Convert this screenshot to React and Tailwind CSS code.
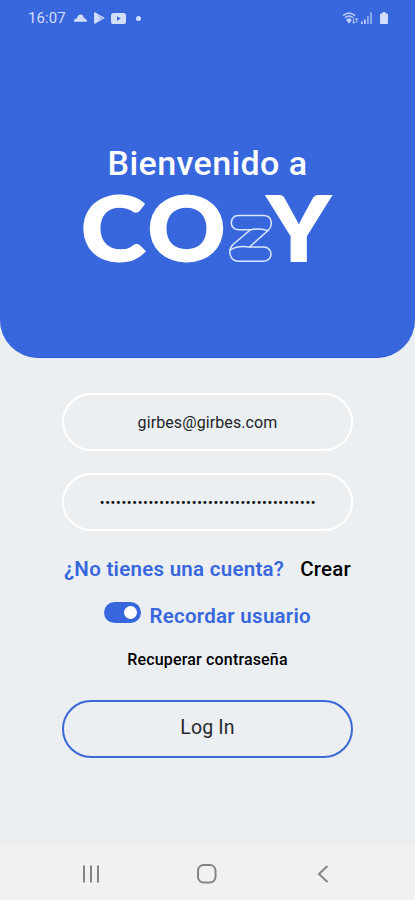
import React from "react";

function StatusBar() {
  return (
    <div className="flex h-9 items-center justify-between pl-[28px] pr-[26px] text-[#d3defa]">
      <div className="flex items-center">
        <span className="w-[45px] whitespace-nowrap text-[15px] leading-none tracking-[0.1px]">16:07</span>
        <svg width="15" height="10" viewBox="0 0 14 10" fill="currentColor">
          <path d="M.4 8.8Q.4 6 3.2 5.6Q4.5 1.6 7.2 1.6Q9.8 1.6 10.4 5.2Q13.4 5.6 13.4 8.8Z" />
        </svg>
        <svg className="ml-[5px]" width="13" height="12" viewBox="0 0 13 12" fill="none" stroke="currentColor" strokeWidth="1.3" strokeLinejoin="round">
          <path d="M1.8 1V11L10.8 6Z" />
          <path d="M2 1L7.8 7.5M2 11L7.8 4.5" />
          <path d="M2 1.5V10.5L5.5 6Z" fill="currentColor" />
        </svg>
        <svg className="ml-[5px]" width="15" height="11" viewBox="0 0 15 11">
          <rect width="15" height="11" rx="2.6" fill="currentColor" />
          <path d="M6 3.2V7.8L9.8 5.5Z" fill="#3867dd" />
        </svg>
        <span className="ml-[10px] h-[5px] w-[5px] rounded-full bg-current" />
      </div>
      <div className="flex items-center">
        <svg width="17" height="14" viewBox="0 0 17 14" fill="none" stroke="currentColor" strokeOpacity=".8" strokeWidth="1.6">
          <path d="M1 4.7Q7 -.4 13 4.7M3 6.7Q7 3.4 11 6.7M5 8.8Q7 7.2 9 8.8" />
          <path d="M7 11.4L5.6 9.6H8.4Z" fill="currentColor" />
          <path d="M11.7 7.2V12.2M10.3 10.8L11.7 12.3L13 10.8M14.7 12V7.2M13.3 8.6L14.7 7.1L16 8.6" strokeWidth="1" />
        </svg>
        <svg className="ml-[2px]" width="12" height="13" viewBox="0 0 12 13" fill="currentColor">
          <path d="M0 9.5H1.7V12H0ZM3 7.5H4.7V12H3Z" opacity=".9" />
          <path d="M6 4H7.8V12H6ZM9 .5H11V12H9Z" opacity=".55" />
        </svg>
        <svg className="ml-[7px] mr-[1px]" width="8" height="13" viewBox="0 0 8 13" fill="currentColor">
          <path d="M2.5 0H5.5V1.5H7Q8 1.5 8 2.5V11Q8 12 7 12H1Q0 12 0 11V2.5Q0 1.5 1 1.5H2.5Z" />
        </svg>
      </div>
    </div>
  );
}

function Logo() {
  return (
    <svg className="mx-auto block overflow-visible" width="260" height="80" viewBox="78 188 260 80">
      <g fill="#fff" stroke="#fff" strokeWidth="1.8" fontFamily="Lato, sans-serif" fontWeight="900" fontSize="90">
        <text x="81" y="260.5" textLength="64.5" lengthAdjust="spacingAndGlyphs">C</text>
        <text x="147.5" y="260.5" textLength="78" lengthAdjust="spacingAndGlyphs">O</text>
        <text x="267.6" y="260.5" textLength="62.5" lengthAdjust="spacingAndGlyphs">Y</text>
      </g>
      <g fill="none" stroke="#dbe8ff" strokeWidth="1.5" strokeLinejoin="round" strokeLinecap="round">
        <path d="M250.5 229.8H238.3C229 229.8 229 215.5 238.3 215.5H263.5C272.5 215.5 273 225.5 268.5 230L249.5 247" />
        <path d="M250.5 229.8Q261 227.8 267.8 230.6" />
        <path d="M250.5 229.8L233 244.5C227.5 250 229.5 261.2 238.3 261.2H263.5C273.5 261.2 273.5 247 263.5 247H249.5Q237 245.5 231.5 249.5" />
      </g>
    </svg>
  );
}

export default function App() {
  return (
    <main className="flex h-[900px] w-[415px] flex-col overflow-hidden bg-[#ebeff2] font-[Roboto,sans-serif] text-black">
      <header className="h-[358px] rounded-b-[38px] border-b border-[#2e5bdc] bg-[#3867dd]">
        <StatusBar />
        <h1 className="mt-[107px] text-center text-[34px] font-medium leading-[40px] tracking-[0.4px] text-white">Bienvenido a</h1>
        <div className="mt-[5px]">
          <Logo />
        </div>
      </header>

      <section className="flex flex-1 flex-col items-center pt-[35px]">
        <div className="flex h-[58px] w-[291px] items-center justify-center rounded-full border-2 border-white pt-px text-[16px] tracking-[0.1px] text-[#222427]">
          girbes@girbes.com
        </div>
        <div className="mt-[22px] flex h-[58px] w-[291px] items-center justify-center rounded-full border-2 border-white pl-px">
          <span className="whitespace-nowrap text-[13px] font-bold leading-none tracking-[0.74px] text-[#111]">{"•".repeat(40)}</span>
        </div>
        <div className="mt-[24px] flex w-[287px] justify-between whitespace-nowrap text-[20.5px] leading-[28px]">
          <span className="font-semibold tracking-[0.27px] text-[#3867dd]">¿No tienes una cuenta?</span>
          <span className="font-medium tracking-[0.2px]">Crear</span>
        </div>
        <div className="mt-[18px] flex h-[30px] w-[207px] justify-between">
          <span className="mt-px flex h-[21px] w-[37px] items-center justify-end rounded-full bg-[#3867dd] pr-1">
            <span className="h-[13px] w-[13px] rounded-full bg-white" />
          </span>
          <span className="whitespace-nowrap text-[20.5px] font-semibold leading-[30px] tracking-[0.27px] text-[#3867dd]">Recordar usuario</span>
        </div>
        <div className="mt-[17px] text-[16px] font-medium leading-[24px] tracking-[0.17px]">Recuperar contraseña</div>
        <button className="mt-[28px] h-[58px] w-[291px] rounded-full border-2 border-[#3c68d8] pb-[2px] text-[19.5px] tracking-[0.15px] text-[#25282c]">
          Log In
        </button>
      </section>

      <nav className="flex h-[56px] items-center bg-[#f1f1f1] pl-[82px] pt-[3px]" aria-label="Navegación">
        <svg width="18" height="20" viewBox="0 0 18 20" stroke="#858585" strokeWidth="2">
          <path d="M2 1.5V18.5M9 1.5V18.5M16 1.5V18.5" />
        </svg>
        <svg className="ml-[97px]" width="20" height="20" viewBox="0 0 20 20" fill="none" stroke="#858585" strokeWidth="2">
          <rect x="1" y="1" width="17.5" height="17.5" rx="5.5" />
        </svg>
        <svg className="ml-[100px]" width="12" height="20" viewBox="0 0 12 20" fill="none" stroke="#858585" strokeWidth="2">
          <path d="M10.5 2L2 10L10.5 18" />
        </svg>
      </nav>
    </main>
  );
}
